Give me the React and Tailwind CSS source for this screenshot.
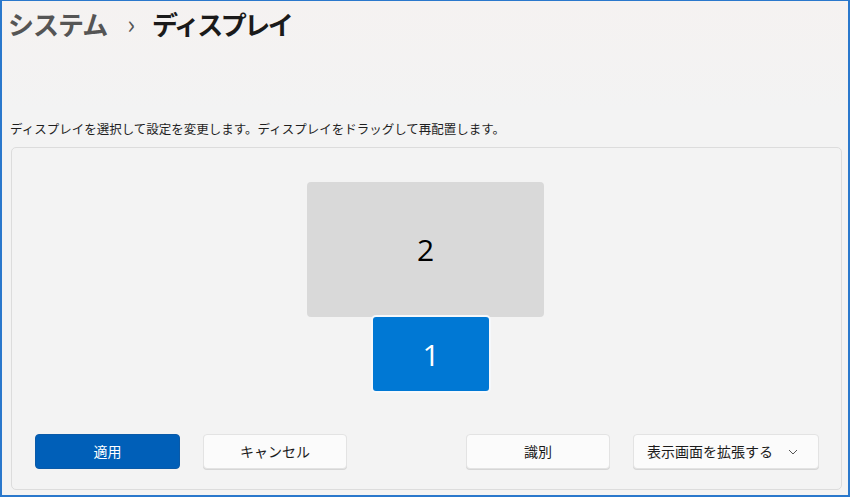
import React from "react";

const font = { fontFamily: '"Noto Sans CJK JP", "Noto Sans", sans-serif' };

function Btn({ children, primary, className = "" }) {
  return (
    <div
      className={
        "h-[35px] rounded-[4px] flex items-center justify-center text-[14px] " +
        (primary
          ? "bg-[#005fb8] text-white border border-[#0a5aa8] "
          : "bg-[#fbfbfb] text-[#1b1b1b] border border-[#e3e3e3] shadow-[0_1px_0_#d6d6d6] ") +
        className
      }
    >
      {children}
    </div>
  );
}

export default function App() {
  return (
    <div
      style={font}
      className="w-[850px] h-[497px] overflow-hidden bg-[#f3f3f3] border-t border-l-2 border-r-2 border-b-2 border-[#2a78cc] flex flex-col"
    >
      <div className="bg-gradient-to-b from-[#f5f2f1] to-[#f3f3f3] h-[108px] flex flex-col">
        <div className="flex items-center pl-[6px] pt-[6px] h-[40px]">
          <span className="text-[26px] leading-none text-[#555555] font-semibold tracking-[-1px]">
            システム
          </span>
          <span className="text-[26px] leading-none text-[#555555] ml-[20px] mr-[17px] -mt-[3px]">›</span>
          <span className="text-[26px] leading-none text-[#1a1a1a] font-bold tracking-[-2.5px]">
            ディスプレイ
          </span>
        </div>
      </div>
      <div className="pl-[8px] text-[12.5px] text-[#1f1f1f] leading-none h-[38px] pt-[14px]">
        ディスプレイを選択して設定を変更します。ディスプレイをドラッグして再配置します。
      </div>
      <div className="ml-[9px] mr-[6px] h-[343px] rounded-[5px] border border-[#dcdcdc] bg-[#f3f3f3] flex flex-col">
        <div className="relative h-[286px]">
          <div className="absolute left-[295px] top-[34px] w-[237px] h-[135px] rounded-[4px] bg-[#d9d9d9] flex items-center justify-center">
            <span className="text-[30px] text-black font-normal" style={{ fontFamily: '"Open Sans", sans-serif' }}>2</span>
          </div>
          <div className="absolute left-[359px] top-[167px] w-[120px] h-[78px] rounded-[5px] border-2 border-[#f6f8fb] bg-[#0078d4] flex items-center justify-center">
            <span className="text-[30px] text-white font-normal" style={{ fontFamily: '"Open Sans", sans-serif' }}>1</span>
          </div>
        </div>
        <div className="flex items-center pl-[23px]">
          <Btn primary className="w-[145px]">適用</Btn>
          <Btn className="w-[144px] ml-[23px]">キャンセル</Btn>
          <Btn className="w-[144px] ml-[119px]">識別</Btn>
          <div className="w-[186px] ml-[23px] h-[35px] rounded-[4px] bg-[#fbfbfb] border border-[#e3e3e3] shadow-[0_1px_0_#d6d6d6] flex items-center text-[14px] text-[#1b1b1b] pl-[13px]">
            <span>表示画面を拡張する</span>
            <svg className="ml-[15px]" width="10" height="6" viewBox="0 0 10 6" fill="none">
              <path d="M1 1l4 4 4-4" stroke="#555" strokeWidth="1" />
            </svg>
          </div>
        </div>
      </div>
    </div>
  );
}
